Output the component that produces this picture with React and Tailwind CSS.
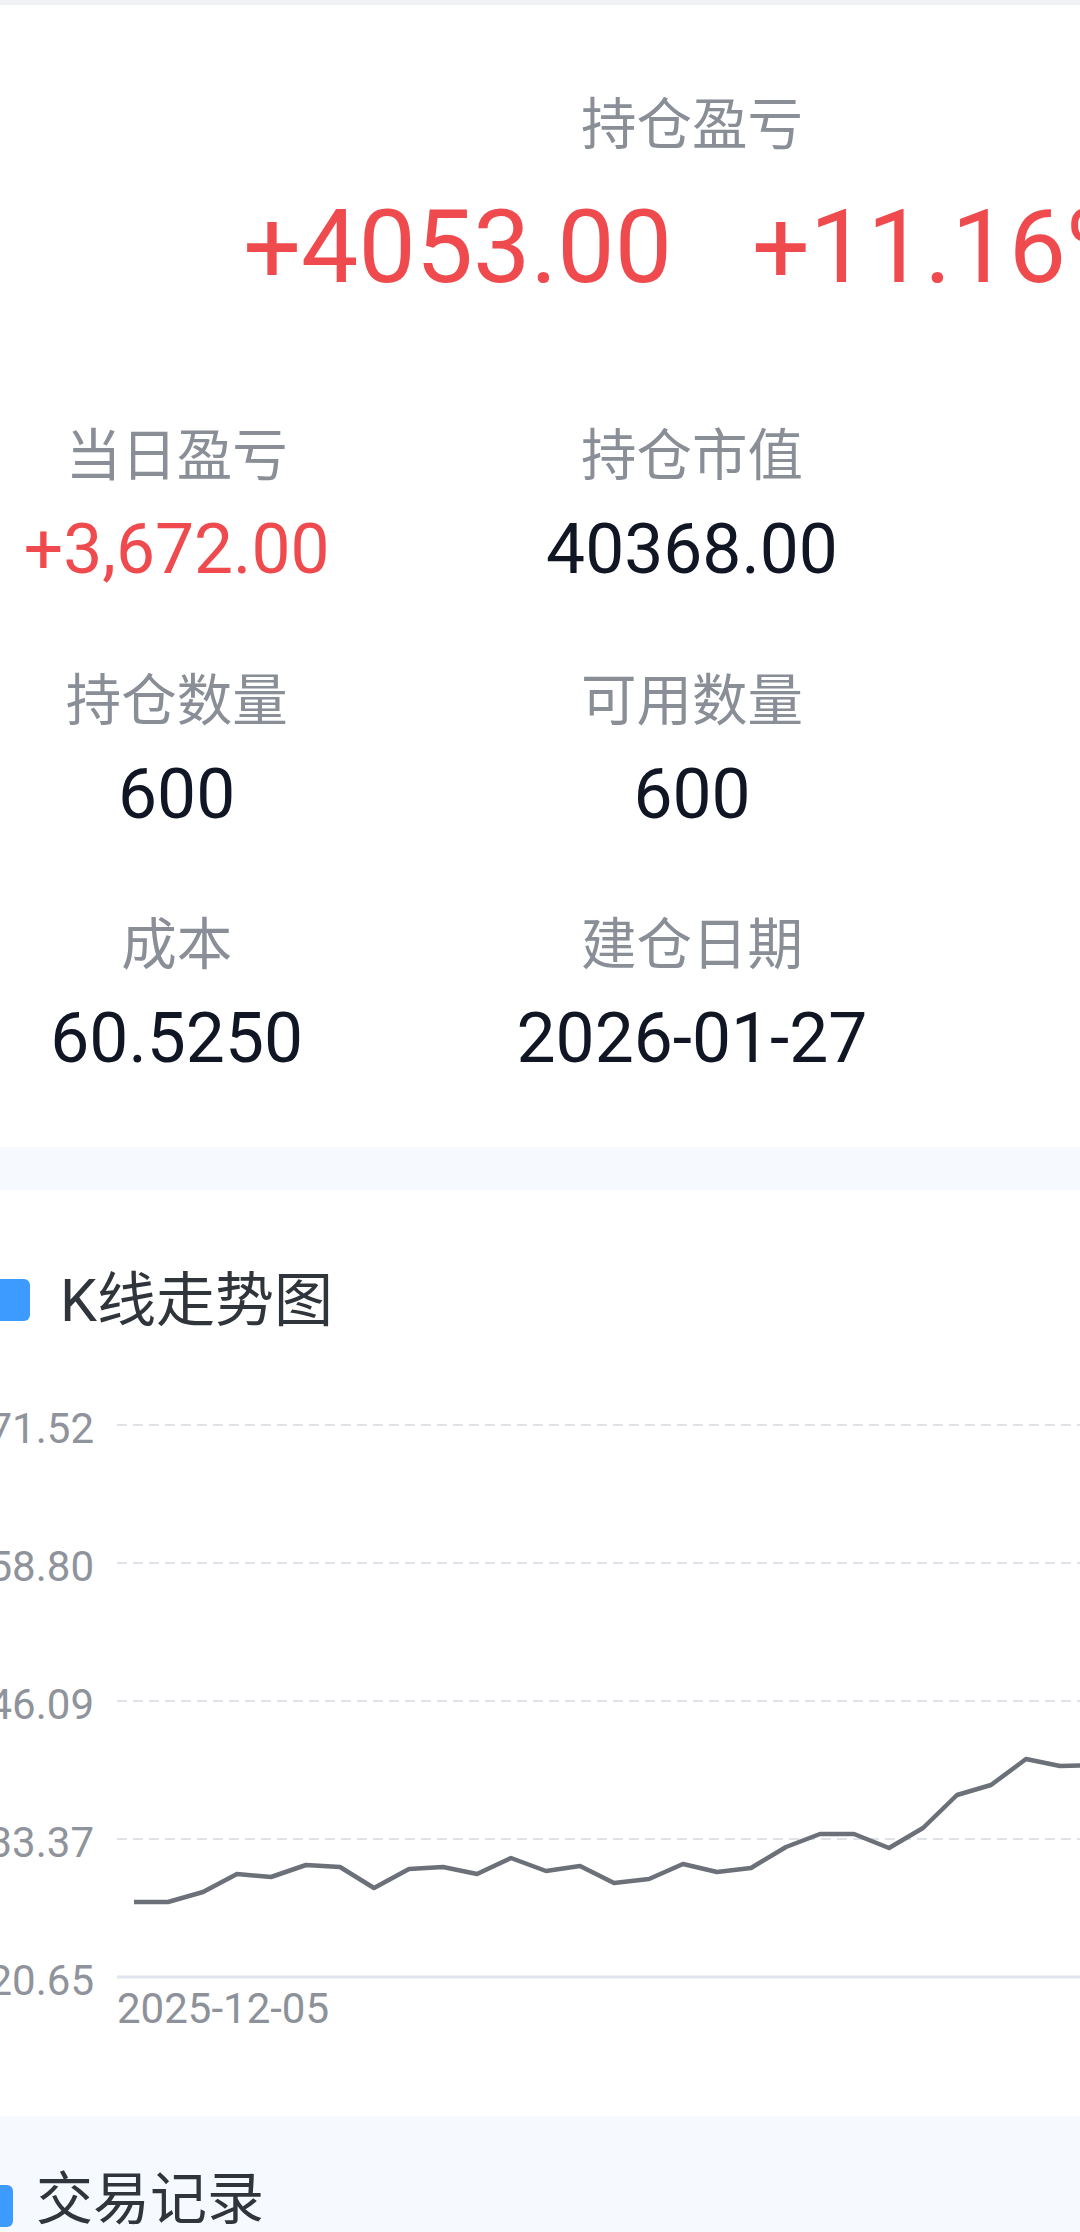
import React from "react";

const stats = [
  { label: "当日盈亏", value: "+3,672.00", red: true },
  { label: "持仓市值", value: "40368.00" },
  { label: "现价", value: "67.2800" },
  { label: "持仓数量", value: "600" },
  { label: "可用数量", value: "600" },
  { label: "冻结数量", value: "0" },
  { label: "成本", value: "60.5250" },
  { label: "建仓日期", value: "2026-01-27" },
  { label: "持仓天数", value: "1" },
];

// price line, already in chart pixels
const points = [
  [134, 520], [168, 520], [203, 510], [237, 492], [271, 495], [306, 483],
  [340, 485], [374, 506], [409, 487], [443, 485], [477, 492], [511, 476],
  [546, 489], [580, 484], [614, 501], [649, 497], [683, 482], [717, 490],
  [751, 486], [786, 465], [820, 452], [854, 452], [889, 466], [923, 446],
  [957, 413], [991, 403], [1026, 377], [1060, 384], [1094, 383],
];

const yTicks = [
  { y: 43, label: "71.52" },
  { y: 181, label: "58.80" },
  { y: 319, label: "46.09" },
  { y: 457, label: "33.37" },
];

function KlineChart() {
  return (
    <svg width="1080" height="660" className="block mt-[48px]" style={{ fontFamily: "Roboto, sans-serif" }}>
      {yTicks.map((t) => (
        <g key={t.label}>
          <line x1="117" x2="1080" y1={t.y} y2={t.y} stroke="#dfe3e8" strokeWidth="2" strokeDasharray="10 6" />
          <text x="94" y={t.y + 18} textAnchor="end" fontSize="42" fill="#8f939b">
            {t.label}
          </text>
        </g>
      ))}
      <line x1="117" x2="1080" y1="595" y2="595" stroke="#e3e5ee" strokeWidth="3" />
      <text x="94" y="613" textAnchor="end" fontSize="42" fill="#8f939b">
        20.65
      </text>
      <text x="117" y="641" fontSize="42" fill="#8d9199">
        2025-12-05
      </text>
      <polyline
        points={points.map((p) => p.join(",")).join(" ")}
        fill="none"
        stroke="#6b7079"
        strokeWidth="4.5"
        strokeLinejoin="round"
      />
    </svg>
  );
}

export default function App() {
  return (
    <div
      className="h-[2232px] w-[1080px] overflow-hidden bg-white"
      style={{ fontFamily: "Roboto, 'Noto Sans CJK SC', sans-serif" }}
    >
      <div className="h-[5px] bg-[#f0f1f5]" />

      {/* position summary */}
      <section className="bg-white pt-[88px] pb-[73px]">
        <div className="-ml-[81px] w-[1546px]">
          <div className="text-center text-[55.5px] leading-[65px] text-[#898e97]">持仓盈亏</div>
          <div className="mt-[38px] flex justify-center gap-[80px] text-[102px] leading-none text-[#ef4b4f]">
            <span>+4053.00</span>
            <span>+11.16%</span>
          </div>
          <div className="mt-[126px] grid grid-cols-3 gap-y-[84px]">
            {stats.map((s) => (
              <div key={s.label} className="flex flex-col items-center">
                <div className="text-[55.5px] leading-[65px] text-[#898e97]">{s.label}</div>
                <div
                  className={`mt-[26px] text-[69.5px] leading-none ${s.red ? "text-[#ef4b4f]" : "text-[#101623]"}`}
                >
                  {s.value}
                </div>
              </div>
            ))}
          </div>
        </div>
      </section>

      <div className="h-[43px] bg-[#f6f9fd]" />

      {/* chart card */}
      <section className="h-[926px] bg-white pt-[77px]">
        <div className="flex items-center gap-[30px]">
          <div className="-ml-[12px] h-[42px] w-[42px] shrink-0 rounded-[6px] bg-[#3d9bff]" />
          <div className="text-[59px] leading-[67px] text-[#30343b]">K线走势图</div>
        </div>
        <KlineChart />
      </section>

      {/* trade records */}
      <section className="bg-[#f6f9fd] pt-[50px]">
        <div className="flex items-center gap-[23px]">
          <div className="-ml-[29px] mt-[14px] h-[42px] w-[42px] shrink-0 rounded-[6px] bg-[#3d9bff]" />
          <div className="text-[57px] leading-[67px] text-[#30343b]">交易记录</div>
        </div>
      </section>
    </div>
  );
}
